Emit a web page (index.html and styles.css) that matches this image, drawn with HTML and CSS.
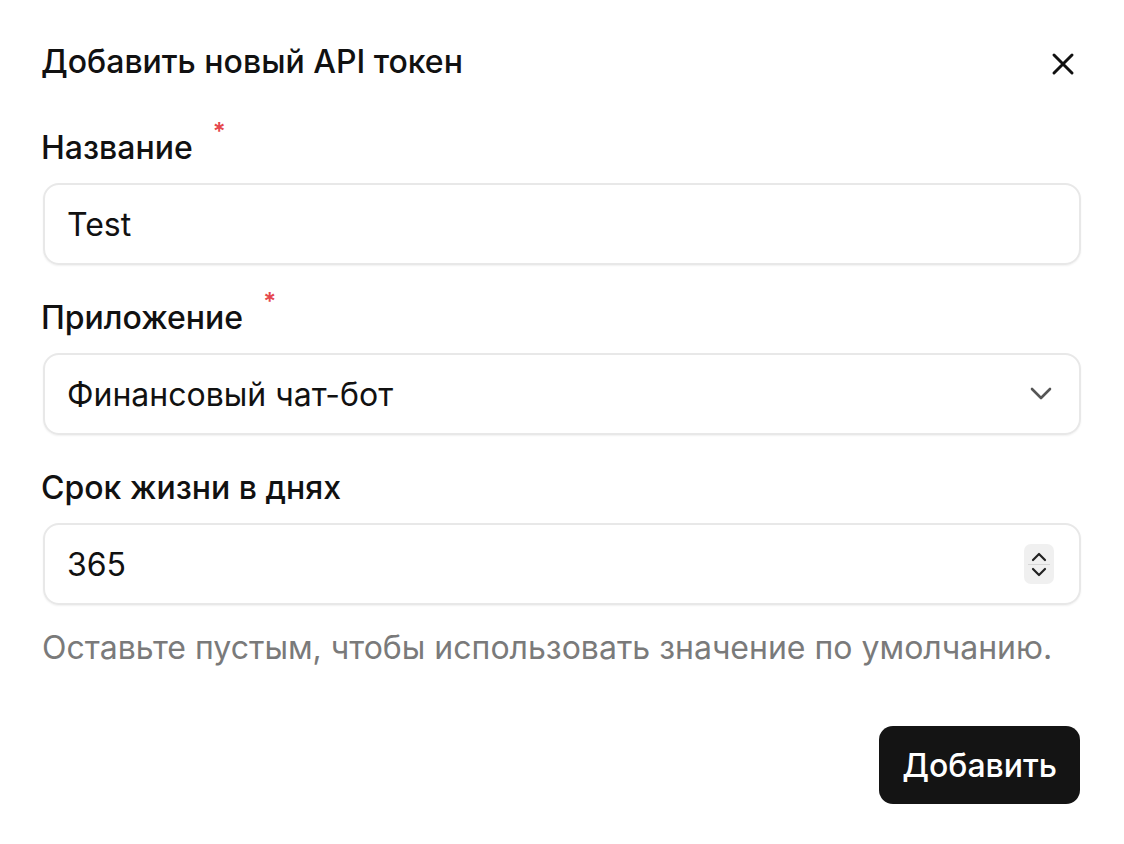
FILE: index.html
```html
<!DOCTYPE html>
<html lang="ru">
<head>
<meta charset="utf-8">
<title>Добавить новый API токен</title>
<link rel="stylesheet" href="styles.css">
</head>
<body>
<div class="dialog">
  <div class="header">
    <h2 class="title">Добавить новый API токен</h2>
    <button class="close" aria-label="Закрыть">
      <svg width="24" height="24" viewBox="0 0 24 24"><path d="M3 3 L21 21 M21 3 L3 21" stroke="#111" stroke-width="3" stroke-linecap="round" fill="none"/></svg>
    </button>
  </div>
  <div class="field">
    <label class="label">Название<span class="req">*</span></label>
    <div class="control"><span class="value">Test</span></div>
  </div>
  <div class="field">
    <label class="label">Приложение<span class="req">*</span></label>
    <div class="control">
      <span class="value">Финансовый чат-бот</span>
      <svg class="chev" width="22" height="14" viewBox="0 0 22 14"><path d="M2 2 L11 11 L20 2" stroke="#555" stroke-width="2.6" stroke-linecap="round" stroke-linejoin="round" fill="none"/></svg>
    </div>
  </div>
  <div class="field">
    <label class="label">Срок жизни в днях</label>
    <div class="control">
      <span class="value">365</span>
      <div class="spin">
        <svg width="16" height="10" viewBox="0 0 16 10"><path d="M2 8 L8 2 L14 8" stroke="#222" stroke-width="2.2" stroke-linecap="round" stroke-linejoin="round" fill="none"/></svg>
        <span class="sep"></span>
        <svg width="16" height="10" viewBox="0 0 16 10"><path d="M2 2 L8 8 L14 2" stroke="#222" stroke-width="2.2" stroke-linecap="round" stroke-linejoin="round" fill="none"/></svg>
      </div>
    </div>
    <p class="hint">Оставьте пустым, чтобы использовать значение по умолчанию.</p>
  </div>
  <div class="footer">
    <button class="primary">Добавить</button>
  </div>
</div>
</body>
</html>
```
FILE: styles.css
```css
* { box-sizing: border-box; }
html, body { margin: 0; background: #fff; }
body {
  font-family: Inter, "Noto Sans", "Liberation Sans", sans-serif;
  color: #111;
}
.dialog {
  width: 1124px;
  padding: 44px 43px 0 43px;
  display: flex;
  flex-direction: column;
}
.header {
  display: flex;
  align-items: center;
  justify-content: space-between;
  height: 36px;
  margin-bottom: 50px;
}
.title {
  margin: 0;
  font-size: 32px;
  line-height: 36px;
  font-weight: 500;
  margin-left: -2px;
}
.close {
  border: 0;
  background: none;
  padding: 0;
  width: 24px;
  height: 24px;
  margin-right: 6px;
  margin-top: 4px;
  display: flex;
}
.field {
  display: flex;
  flex-direction: column;
  margin-bottom: 35px;
}
.label {
  font-size: 32px;
  line-height: 36px;
  font-weight: 500;
  margin-bottom: 17px;
  margin-left: -2px;
}
.req {
  color: #e5484d;
  font-size: 24px;
  font-weight: 600;
  vertical-align: top;
  line-height: 20px;
  margin-left: 20px;
  position: relative;
  top: -8px;
}
.control {
  height: 82px;
  border: 2px solid #e8e8e8;
  border-radius: 16px;
  box-shadow: 0 1px 2px rgba(0,0,0,0.06);
  display: flex;
  align-items: center;
  justify-content: space-between;
  padding: 0 25px 0 22px;
}
.value {
  font-size: 32px;
  font-weight: 400;
}
.chev { margin-right: 2px; }
.spin {
  width: 30px;
  height: 40px;
  background: #f0f0f0;
  border-radius: 7px;
  display: flex;
  flex-direction: column;
  align-items: center;
  justify-content: center;
  gap: 2px;
}
.sep {
  width: 22px;
  height: 1px;
  background: #d6d6d6;
}
.hint {
  margin: 25px 0 0 -1px;
  font-size: 32px;
  line-height: 36px;
  color: #7a7a7a;
}
.footer {
  display: flex;
  justify-content: flex-end;
  margin-top: 25px;
}
.primary {
  background: #141414;
  color: #fff;
  border: 0;
  border-radius: 14px;
  height: 78px;
  padding: 0 23px;
  margin-right: 1px;
  font-family: inherit;
  font-size: 32px;
  font-weight: 500;
}
```
